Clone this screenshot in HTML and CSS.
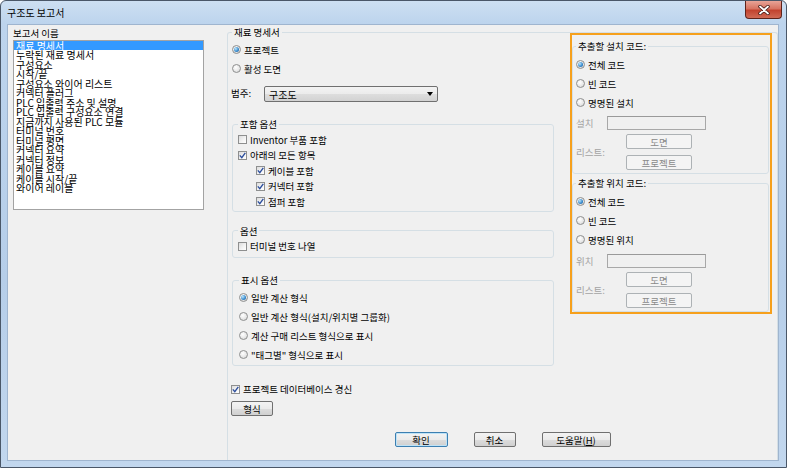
FILE: index.html
```html
<!DOCTYPE html>
<html>
<head>
    <title>구조도 보고서</title>
    <link rel="stylesheet" href="styles.css">
</head>
<body>
<div class="window">
    <div class="titlebar">
        <span class="title">구조도 보고서</span>
        <span class="close">
            <svg width="12" height="10" viewBox="0 0 12 10">
                <path d="M2 1.5 L10 8.5 M10 1.5 L2 8.5" stroke="#3b1410" stroke-width="3.4" stroke-linecap="round"/>
                <path d="M2 1.5 L10 8.5 M10 1.5 L2 8.5" stroke="#fff" stroke-width="1.8" stroke-linecap="round"/>
            </svg>
        </span>
    </div>

    <div class="client">
        <div class="left">
            <div class="list-label">보고서 이름</div>
            <ul class="report-list">
                <li class="selected">재료 명세서</li>
                <li>누락된 재료 명세서</li>
                <li>구성요소</li>
                <li>시작/끝</li>
                <li>구성요소 와이어 리스트</li>
                <li>커넥터 플러그</li>
                <li>PLC 입출력 주소 및 설명</li>
                <li>PLC 입출력 구성요소 연결</li>
                <li>지금까지 사용된 PLC 모듈</li>
                <li>터미널 번호</li>
                <li>터미널 평면</li>
                <li>커넥터 요약</li>
                <li>커넥터 정보</li>
                <li>케이블 요약</li>
                <li>케이블 시작/끝</li>
                <li>와이어 레이블</li>
            </ul>
        </div>

        <fieldset class="bom">
            <legend>재료 명세서</legend>
            <div class="bom-top">
                <div class="bom-main">
                    <div class="rows19 first-rows">
                        <label class="opt"><span class="rb on"></span>프로젝트</label>
                        <label class="opt"><span class="rb"></span>활성 도면</label>
                    </div>

                    <div class="category">
                        <span class="category-label">범주:</span>
                        <div class="combo">
                            <span>구조도</span>
                            <span class="arrow"></span>
                        </div>
                    </div>

                    <fieldset class="group include">
                        <legend>포함 옵션</legend>
                        <div class="rows15">
                            <label class="opt"><span class="cb"></span>Inventor 부품 포함</label>
                            <label class="opt"><span class="cb"><svg width="7" height="7" viewBox="0 0 7 7"><path d="M0.8 3.4 L2.8 5.6 L6.3 0.9" fill="none" stroke="#2d4f9e" stroke-width="1.4"/></svg></span>아래의 모든 항목</label>
                            <label class="opt sub"><span class="cb"><svg width="7" height="7" viewBox="0 0 7 7"><path d="M0.8 3.4 L2.8 5.6 L6.3 0.9" fill="none" stroke="#2d4f9e" stroke-width="1.4"/></svg></span>케이블 포함</label>
                            <label class="opt sub"><span class="cb"><svg width="7" height="7" viewBox="0 0 7 7"><path d="M0.8 3.4 L2.8 5.6 L6.3 0.9" fill="none" stroke="#2d4f9e" stroke-width="1.4"/></svg></span>커넥터 포함</label>
                            <label class="opt sub"><span class="cb"><svg width="7" height="7" viewBox="0 0 7 7"><path d="M0.8 3.4 L2.8 5.6 L6.3 0.9" fill="none" stroke="#2d4f9e" stroke-width="1.4"/></svg></span>점퍼 포함</label>
                        </div>
                    </fieldset>

                    <fieldset class="group options">
                        <legend>옵션</legend>
                        <div class="rows15">
                            <label class="opt"><span class="cb"></span>터미널 번호 나열</label>
                        </div>
                    </fieldset>

                    <fieldset class="group display">
                        <legend>표시 옵션</legend>
                        <div class="rows19">
                            <label class="opt"><span class="rb on"></span>일반 계산 형식</label>
                            <label class="opt"><span class="rb"></span>일반 계산 형식(설치/위치별 그룹화)</label>
                            <label class="opt"><span class="rb"></span>계산 구매 리스트 형식으로 표시</label>
                            <label class="opt"><span class="rb"></span>"태그별" 형식으로 표시</label>
                        </div>
                    </fieldset>
                </div>

                <div class="extract">
                    <fieldset class="group code-group">
                        <legend>추출할 설치 코드:</legend>
                        <div class="rows19">
                            <label class="opt"><span class="rb on"></span>전체 코드</label>
                            <label class="opt"><span class="rb"></span>빈 코드</label>
                            <label class="opt"><span class="rb"></span>명명된 설치</label>
                        </div>
                        <div class="field-grid">
                            <span class="muted">설치</span>
                            <div class="textbox"></div>
                            <span class="muted">리스트:</span>
                            <div class="pick-buttons">
                                <button class="btn disabled">도면</button>
                                <button class="btn disabled">프로젝트</button>
                            </div>
                        </div>
                    </fieldset>

                    <fieldset class="group code-group second">
                        <legend>추출할 위치 코드:</legend>
                        <div class="rows19">
                            <label class="opt"><span class="rb on"></span>전체 코드</label>
                            <label class="opt"><span class="rb"></span>빈 코드</label>
                            <label class="opt"><span class="rb"></span>명명된 위치</label>
                        </div>
                        <div class="field-grid">
                            <span class="muted">위치</span>
                            <div class="textbox"></div>
                            <span class="muted">리스트:</span>
                            <div class="pick-buttons">
                                <button class="btn disabled">도면</button>
                                <button class="btn disabled">프로젝트</button>
                            </div>
                        </div>
                    </fieldset>
                </div>
            </div>

            <label class="opt db-row"><span class="cb"><svg width="7" height="7" viewBox="0 0 7 7"><path d="M0.8 3.4 L2.8 5.6 L6.3 0.9" fill="none" stroke="#2d4f9e" stroke-width="1.4"/></svg></span>프로젝트 데이터베이스 경신</label>
            <button class="btn format-btn">형식</button>

            <div class="dialog-buttons">
                <button class="btn default ok">확인</button>
                <button class="btn cancel">취소</button>
                <button class="btn help">도움말(<u>H</u>)</button>
            </div>
        </fieldset>
    </div>
</div>
</body>
</html>
```

FILE: styles.css
```css
* {
    box-sizing: border-box;
}

body {
    margin: 0;
    font-family: "Noto Sans CJK KR", "Noto Sans", sans-serif;
    font-size: 9.5px;
    color: #000;
    background: #fff;
}

/* window frame */
.window {
    width: 787px;
    height: 468px;
    border: 1px solid #4a5768;
    border-radius: 6px 6px 0 0;
    padding: 0 7px 6px 6px;
    background: linear-gradient(180deg, #cddff2 0, #bdd4ed 22px, #b6cee9 60%, #c2d7ee 100%);
    display: flex;
    flex-direction: column;
    overflow: hidden;
}

.titlebar {
    height: 23px;
    display: flex;
    justify-content: space-between;
    align-items: flex-start;
    flex-shrink: 0;
}

.title {
    font-size: 10px;
    line-height: 23px;
    padding-left: 0;
}

.close {
    width: 37px;
    height: 18px;
    margin-right: -3px;
    border: 1px solid #5e231b;
    border-top: none;
    border-radius: 0 0 4px 4px;
    background: linear-gradient(180deg, #e8a497 0%, #d77462 45%, #c2432f 55%, #d06a55 100%);
    display: flex;
    align-items: center;
    justify-content: center;
}

.client {
    flex: 1;
    display: flex;
    background: #f0f0f0;
    border: 1px solid #9fb5cf;
    overflow: hidden;
}

/* report list */
.left {
    width: 191px;
    margin-left: 5px;
    padding-top: 2px;
    flex-shrink: 0;
}

.list-label {
    line-height: 12px;
    height: 12px;
    margin-bottom: 1px;
}

.report-list {
    list-style: none;
    margin: 0;
    padding: 0;
    height: 170px;
    background: #fff;
    border: 1px solid #a3a3a3;
    font-size: 10px;
    overflow: hidden;
}

.report-list li {
    height: 9.47px;
    line-height: 9.47px;
    padding-left: 2px;
    white-space: nowrap;
}

.report-list li.selected {
    background: #3399ff;
    color: #fff;
}

/* group boxes */
fieldset {
    margin: 0;
    min-width: 0;
    border: 1px solid #d5dfe5;
    border-radius: 3px;
}

legend {
    line-height: 12px;
    padding: 0 2px;
}

.bom {
    margin-left: 23px;
    margin-top: 1px;
    flex: 1;
    padding: 0 4px;
    border-bottom: none;
    border-radius: 3px 3px 0 0;
}

.bom-top {
    display: flex;
    gap: 16px;
    align-items: flex-start;
}

.bom-main {
    width: 322px;
    flex-shrink: 0;
}

.opt {
    display: flex;
    align-items: center;
    gap: 3px;
    line-height: 12px;
    white-space: nowrap;
}

.rows19 .opt {
    height: 19px;
}

.rows15 .opt {
    height: 15.5px;
}

.first-rows {
    padding-top: 2px;
}

/* radio and check marks */
.rb {
    width: 9px;
    height: 9px;
    border-radius: 50%;
    border: 1px solid #8e8f8f;
    background: radial-gradient(circle at 40% 35%, #ffffff 0%, #e6e6e6 60%, #cfcfcf 100%);
    display: flex;
    align-items: center;
    justify-content: center;
    flex-shrink: 0;
}

.rb.on::after {
    content: "";
    width: 5px;
    height: 5px;
    border-radius: 50%;
    background: radial-gradient(circle at 35% 35%, #bfe6fb 0%, #3d8fd0 55%, #16508f 100%);
}

.cb {
    width: 9px;
    height: 9px;
    border: 1px solid #8e8f8f;
    background: linear-gradient(135deg, #dcdcdc 0%, #f4f4f4 60%, #ffffff 100%);
    display: flex;
    align-items: center;
    justify-content: center;
    flex-shrink: 0;
}

/* category combo */
.category {
    margin-top: 8px;
    height: 16px;
    display: flex;
    align-items: center;
}

.category-label {
    width: 33px;
    margin-left: -1px;
    margin-top: -2px;
}

.combo {
    width: 174px;
    height: 16px;
    border: 1px solid #707070;
    border-radius: 2px;
    background: linear-gradient(180deg, #f3f3f3 0%, #ebebeb 50%, #dddddd 51%, #d2d2d2 100%);
    display: flex;
    align-items: center;
    justify-content: space-between;
    padding: 0 4px 0 4px;
    font-size: 10px;
}

.arrow {
    width: 0;
    height: 0;
    border-left: 3.5px solid transparent;
    border-right: 3.5px solid transparent;
    border-top: 4px solid #000;
}

/* inner groups of the left part */
.group {
    padding: 0 4px 0 5px;
}

.include {
    margin-top: 16px;
}

.include .rows15 {
    padding-top: 2px;
    padding-bottom: 1px;
}

.opt.sub {
    margin-left: 18px;
}

.options {
    margin-top: 13px;
}

.options .rows15 {
    padding-top: 2px;
    padding-bottom: 3px;
}

.display {
    margin-top: 16px;
    padding-left: 6px;
}

.display .rows19 {
    padding-top: 2px;
    padding-bottom: 1px;
}

/* orange extraction panel */
.extract {
    width: 202px;
    margin-top: -5px;
    border: 2px solid #f6a01c;
    flex-shrink: 0;
}

.code-group {
    margin: 5px 1px 0 0;
    padding: 0 4px 3px 3px;
}

.code-group legend {
    padding: 0 2px;
}

.code-group.second {
    margin-top: 3px;
}

.code-group .rows19 {
    padding-top: 3px;
}

.field-grid {
    display: grid;
    grid-template-columns: 31px 1fr;
    row-gap: 4px;
    align-items: center;
    margin-top: 4px;
}

.second .field-grid {
    margin-top: 5px;
}

.muted {
    color: #a3a3a3;
}

.textbox {
    width: 99px;
    height: 14px;
    border: 1px solid #a8a8a8;
    border-top-color: #9a9a9a;
    background: #f0f0f0;
}

.pick-buttons {
    display: flex;
    flex-direction: column;
    gap: 6px;
    margin-left: 19px;
}

/* buttons */
.btn {
    height: 15px;
    padding: 0;
    font-family: inherit;
    font-size: 9.5px;
    line-height: 12px;
    color: #000;
    border: 1px solid #707070;
    border-radius: 2px;
    background: linear-gradient(180deg, #f3f3f3 0%, #ebebeb 50%, #dddddd 51%, #d0d0d0 100%);
}

.btn.disabled {
    width: 66px;
    color: #8a8a8a;
    border-color: #adb2b5;
    background: #f4f4f4;
}

.db-row {
    height: 16px;
    margin-top: 15px;
    margin-left: -1px;
}

.format-btn {
    display: block;
    width: 42px;
    margin-top: 4px;
    margin-left: -1px;
}

.dialog-buttons {
    display: flex;
    justify-content: center;
    gap: 26px;
    margin-top: 16px;
}

.ok {
    width: 53px;
}

.btn.default {
    border-color: #3c7fb1;
    box-shadow: inset 0 0 0 1px #bfe3f7;
}

.cancel {
    width: 42px;
}

.help {
    width: 69px;
}
```
